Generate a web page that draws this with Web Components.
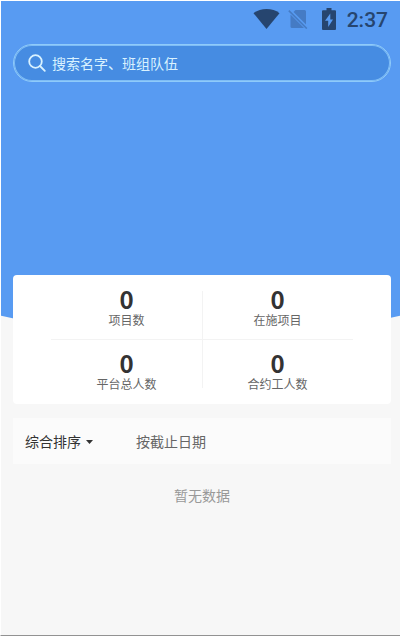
<!DOCTYPE html>
<html lang="zh-CN">
<head>
<meta charset="utf-8">
<meta name="viewport" content="width=device-width, initial-scale=1">
<title>项目</title>
<style>
  html, body { margin: 0; height: 100%; }
  body { background: #fff; font-family: Roboto, "Noto Sans CJK SC", sans-serif; }
</style>
</head>
<body>
<project-page>
  <page-hero slot="hero">
    <status-bar time="2:37"></status-bar>
    <search-field hint="搜索名字、班组队伍"></search-field>
  </page-hero>
  <stat-board>
    <stat-item value="0">项目数</stat-item>
    <stat-item value="0">在施项目</stat-item>
    <stat-item value="0">平台总人数</stat-item>
    <stat-item value="0">合约工人数</stat-item>
  </stat-board>
  <sort-bar></sort-bar>
  <empty-note>暂无数据</empty-note>
</project-page>

<script>
  const define = (name, render) => customElements.define(name, class extends HTMLElement {
    constructor() {
      super();
      this.attachShadow({ mode: 'open' });
    }
    connectedCallback() {
      this.shadowRoot.innerHTML = render(this);
    }
  });

  define('project-page', () => `
    <style>
      :host { display: flex; flex-direction: column; box-sizing: border-box; min-height: 100%;
        border: solid #fff; border-width: 1px 0 0 1px; border-bottom: 1px solid #929292;
        background: #f7f7f7; background-clip: padding-box; }
      main { display: flex; flex-direction: column; gap: 14px; padding: 0 9px 0 12px; margin-top: -63px; position: relative; }
    </style>
    <slot name="hero"></slot>
    <main><slot></slot></main>`);

  define('page-hero', () => `
    <style>
      :host { display: flex; flex-direction: column; gap: 8px; box-sizing: border-box; height: 337px;
        padding: 0 9px 0 12px; background: #589bf2; clip-path: ellipse(140% 100% at 50% 0); }
    </style>
    <slot></slot>`);

  define('status-bar', el => `
    <style>
      :host { display: flex; justify-content: flex-end; align-items: center; height: 35px; color: #26456f; }
      svg { display: block; fill: currentColor; }
      .wifi { margin-right: 8px; }
      .sim { margin-right: 14px; color: #457bc4; }
      .battery { margin-right: 11px; }
      time { font-size: 21px; font-weight: 500; line-height: 24px; margin-right: 3px; padding-top: 2px; }
    </style>
    <svg class="wifi" width="27" height="20" viewBox="0 0 27 20" aria-hidden="true"><path d="M.5 4.2C4 1.400 8.500 0 13.500 0s9.500 1.400 13 4.200L13.500 20z"/></svg>
    <svg class="sim" width="20" height="20" viewBox="0 0 20 20" aria-hidden="true"><path d="M7.500 1H16.500Q18 1 18 2.500V15.500L5.500 3z"/><path d="M2.500 5.500L16 19H4Q2.500 19 2.500 17.500z"/><path d="M.8 1.600L18.800 19.600" stroke="currentColor" stroke-width="1.500"/></svg>
    <svg class="battery" width="14" height="22" viewBox="0 0 14 22" aria-hidden="true"><path fill-rule="evenodd" d="M4.500 0h5v2.300H13q1 0 1 1V21q0 1-1 1H1q-1 0-1-1V3.300q0-1 1-1h3.500zM8.300 5.500L3 12.800h3.200v6.200L11 11.500H8.300z"/></svg>
    <time>${el.getAttribute('time')}</time>`);

  define('search-field', el => `
    <style>
      :host { display: block; }
      label { display: flex; align-items: center; gap: 6px; box-sizing: border-box; height: 38px; padding: 0 14px;
        border: 1px solid #8fcbfa; border-radius: 19px; background: #468ce2; color: #d9f2ff;
        box-shadow: inset 0 0 0 1px #7fbdf6; }
      svg { flex: none; }
      input { flex: 1; min-width: 0; border: 0; padding: 2px 0 0; outline: 0; background: none; color: inherit;
        font: inherit; font-size: 14px; line-height: 20px; }
      input::placeholder { color: inherit; opacity: 1; }
    </style>
    <label>
      <svg width="18" height="18" viewBox="0 0 18 18" fill="none" stroke="currentColor" stroke-width="1.800" stroke-linecap="round" aria-hidden="true"><circle cx="7.500" cy="7.500" r="6.300"/><path d="M12 12l4.800 4.800"/></svg>
      <input type="search" aria-label="${el.getAttribute('hint')}" placeholder="${el.getAttribute('hint')}">
    </label>`);

  define('stat-board', () => `
    <style>
      :host { display: block; padding: 0 38px; border-radius: 4px; background: #fff; }
      .grid { display: grid; grid-template-columns: 1fr 1fr; grid-auto-rows: 64px; padding-bottom: 1px;
        background:
          linear-gradient(#f3f3f3, #f3f3f3) center 64px / 100% 1px no-repeat,
          linear-gradient(#f3f3f3, #f3f3f3) center 16px / 1px calc(100% - 32px) no-repeat; }
    </style>
    <div class="grid"><slot></slot></div>`);

  define('stat-item', el => `
    <style>
      :host { display: flex; flex-direction: column; align-items: center; padding-top: 12px; }
      strong { font-family: "Noto Sans CJK SC", sans-serif; font-size: 24px; font-weight: 700; line-height: 24px; color: #333; }
      span { font-size: 12px; line-height: 20px; color: #666; }
    </style>
    <strong>${el.getAttribute('value')}</strong>
    <span><slot></slot></span>`);

  define('sort-bar', () => `
    <style>
      :host { display: flex; align-items: center; gap: 43px; height: 46px; padding: 0 12px; background: #fbfbfb; }
      button { display: flex; align-items: center; gap: 5px; border: 0; padding: 2px 0 0; background: none;
        font: inherit; font-size: 14px; line-height: 20px; color: #666; }
      .active { color: #333; }
    </style>
    <button class="active" type="button">综合排序
      <svg width="7" height="4" viewBox="0 0 7 4" fill="currentColor" aria-hidden="true"><path d="M0 0h7L3.500 4z"/></svg>
    </button>
    <button type="button">按截止日期</button>`);

  define('empty-note', () => `
    <style>
      :host { display: block; padding-top: 8px; text-align: center; font-size: 14px; line-height: 20px; color: #999; }
    </style>
    <slot></slot>`);
</script>
</body>
</html>
